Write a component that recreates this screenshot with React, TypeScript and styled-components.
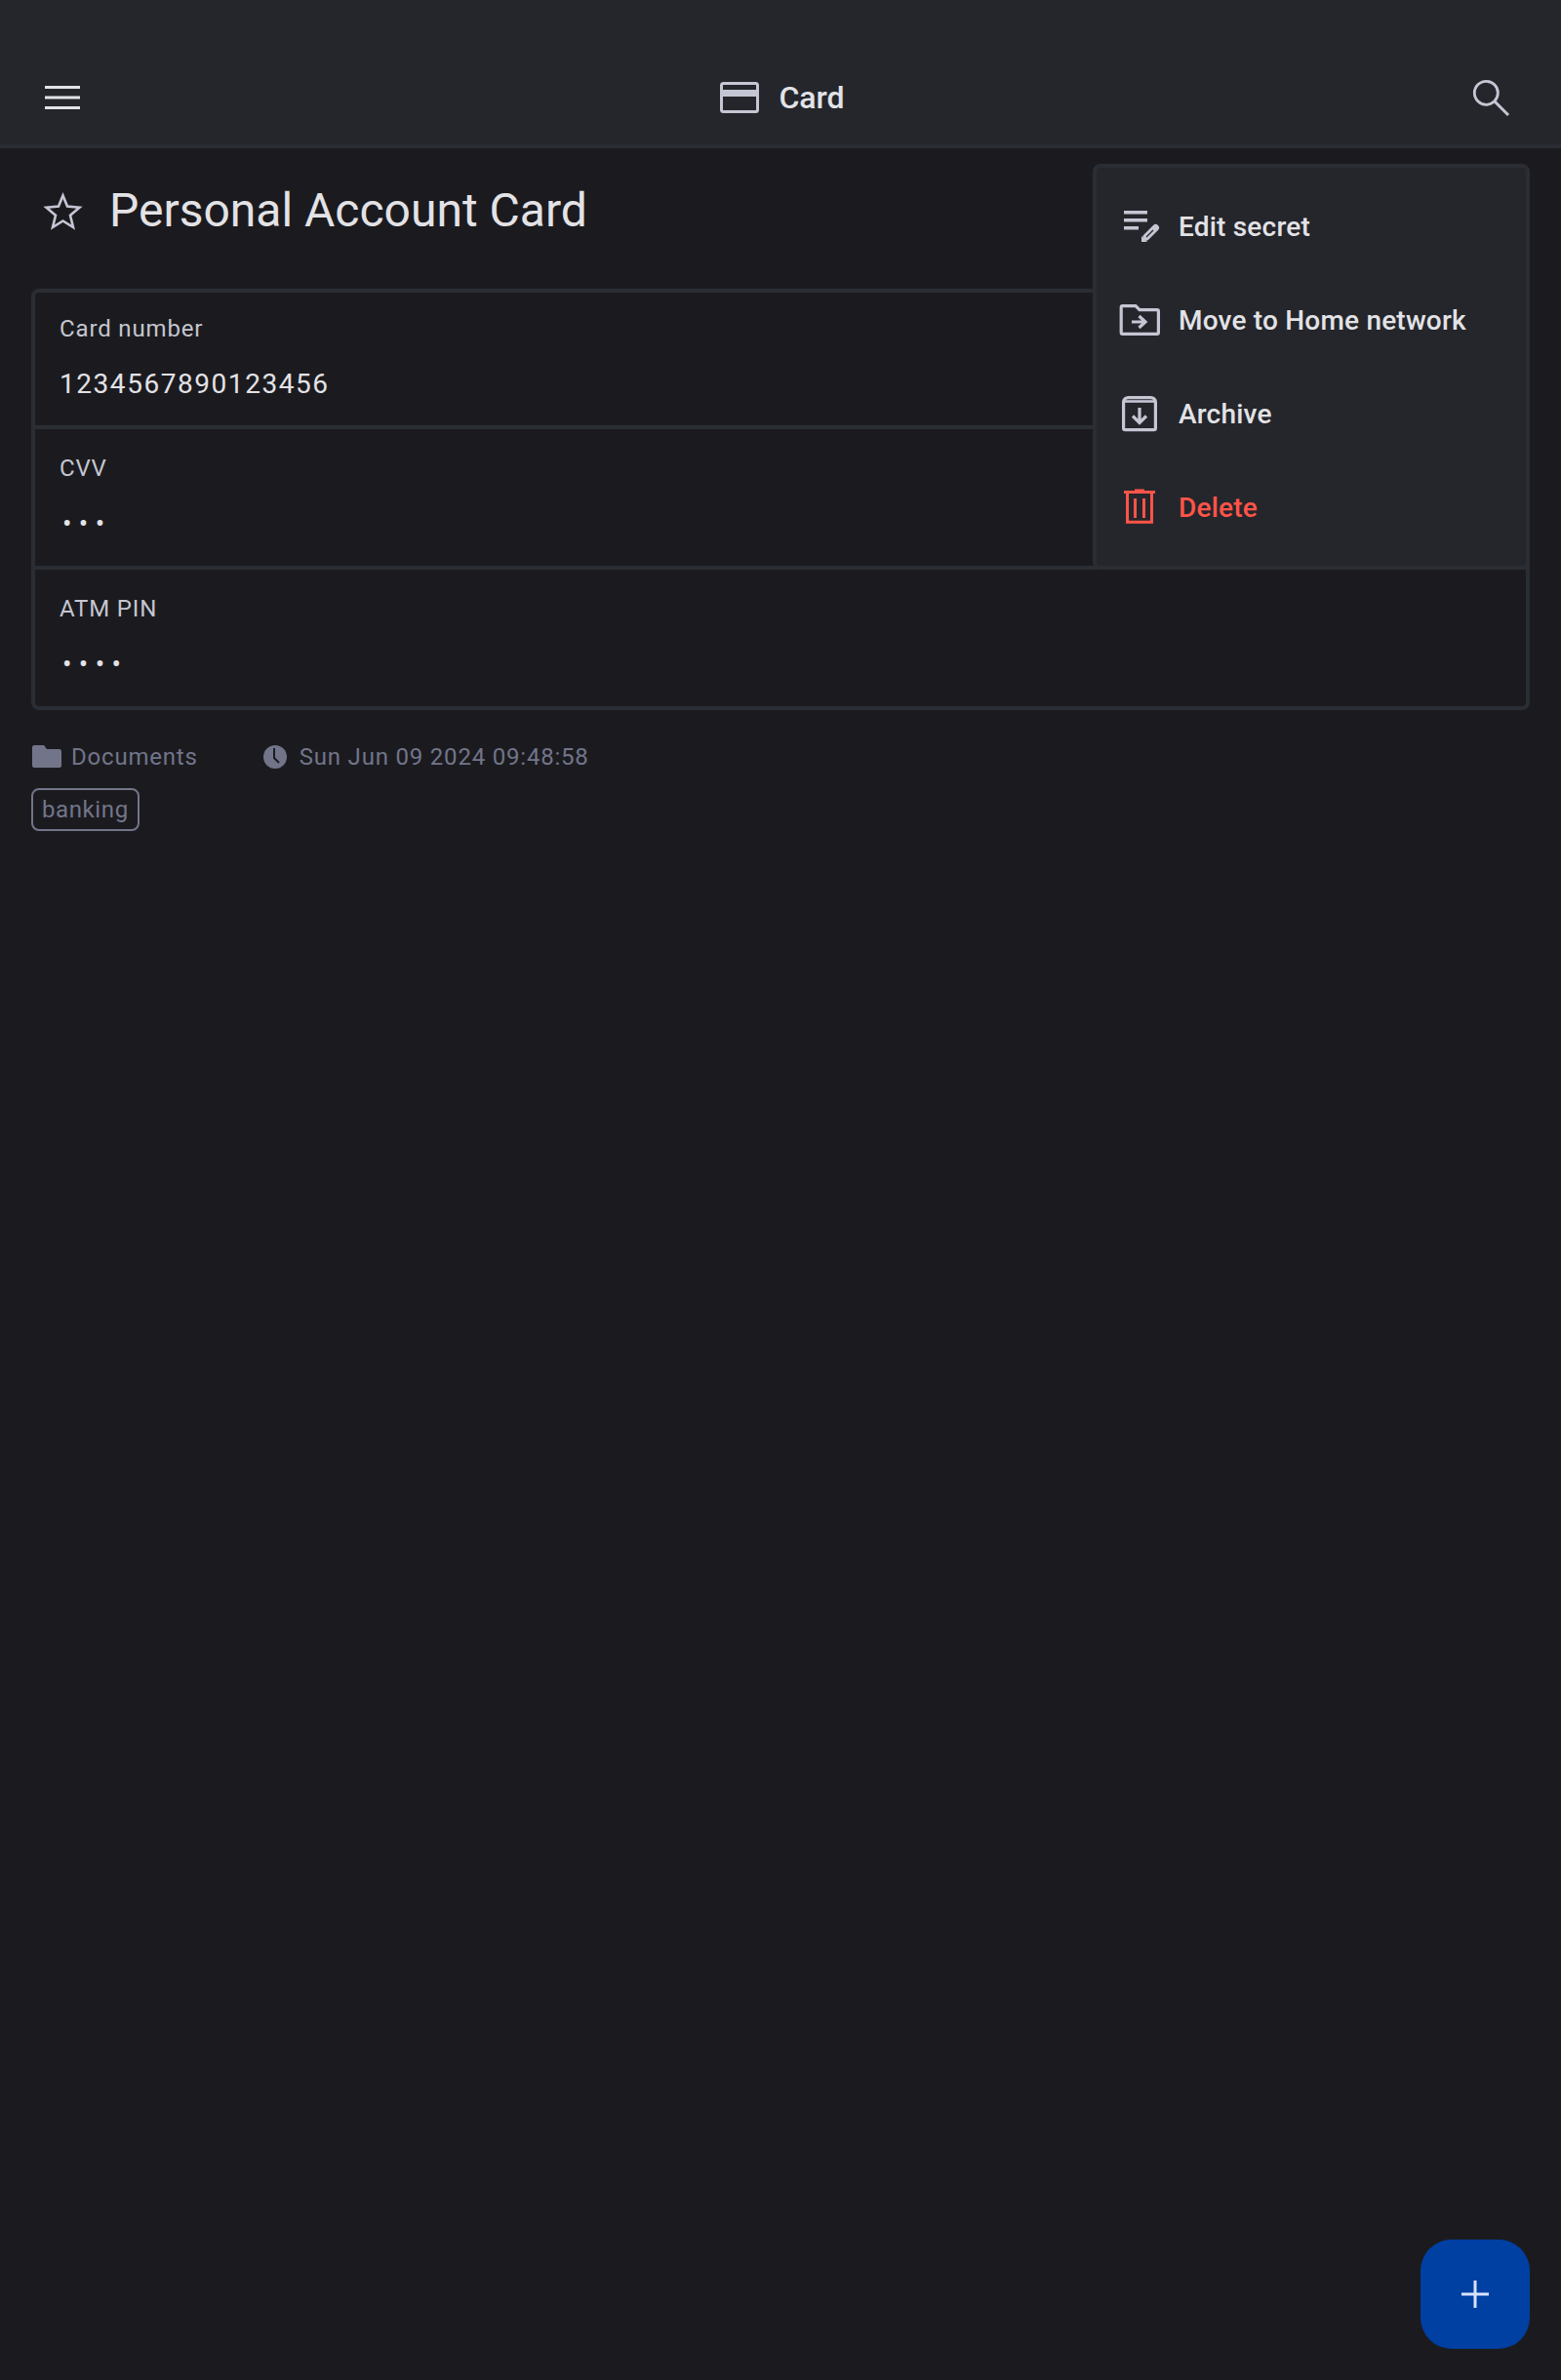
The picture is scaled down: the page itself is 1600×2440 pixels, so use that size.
import React from 'react';
import styled, { createGlobalStyle } from 'styled-components';

const Global = createGlobalStyle`
  html, body { margin: 0; padding: 0; background: #1b1b1f; }
  * { box-sizing: border-box; }
`;

const Page = styled.div`
  position: relative;
  width: 1600px;
  height: 2440px;
  overflow: hidden;
  background: #1b1b1f;
  color: #e3e2e6;
  font-family: Roboto, "Liberation Sans", sans-serif;
`;

const Header = styled.header`
  height: 152px;
  padding: 52px 48px 0 40px;
  background: #24262b;
  border-bottom: 4px solid #2a2d34;
  display: flex;
  align-items: center;
  justify-content: space-between;
`;

const HeaderTitle = styled.div`
  display: flex;
  align-items: center;
  gap: 16px;
  margin-left: 8px;
  font-size: 32px;
  font-weight: 500;
  line-height: 48px;
`;

const Icon = styled.svg<{ $color?: string }>`
  display: block;
  width: 48px;
  height: 48px;
  flex: none;
  color: ${p => p.$color ?? '#c5c6d4'};
`;

const Main = styled.main`
  padding: 0 32px;
`;

const TitleRow = styled.div`
  height: 144px;
  padding: 39px 8px 0;
  display: flex;
  align-items: flex-start;
  gap: 24px;
`;

const Title = styled.h1`
  margin: 1px 0 0;
  font-size: 48px;
  font-weight: 400;
  line-height: 48px;
  color: #e3e2e6;
`;

const Fields = styled.section`
  border: 4px solid #2a2d34;
  border-radius: 8px;
`;

const Field = styled.div<{ $top: number; $height: number; $last?: boolean }>`
  height: ${p => p.$height}px;
  padding: ${p => p.$top}px 25px 0;
  border-bottom: ${p => (p.$last ? 'none' : '4px solid #2a2d34')};
`;

const Label = styled.div`
  font-size: 24px;
  line-height: 32px;
  letter-spacing: 0.85px;
  color: #c5c6d0;
`;

const Value = styled.div<{ $masked?: boolean }>`
  margin-top: 23px;
  padding-left: ${p => (p.$masked ? '3px' : '0')};
  font-size: 28px;
  line-height: 36px;
  letter-spacing: ${p => (p.$masked ? '7.4px' : '1.55px')};
  color: #e3e2e6;
`;

const Meta = styled.div`
  display: flex;
  align-items: center;
  gap: 63px;
  height: 48px;
  margin-top: 24px;
  color: #72758a;
  font-size: 24px;
  letter-spacing: 0.8px;
`;

const MetaItem = styled.div`
  display: flex;
  align-items: center;
  gap: 9px;
`;

const MetaIcon = styled.svg`
  display: block;
  width: 32px;
  height: 32px;
  flex: none;
  color: #72758a;
`;

const Tag = styled.div`
  display: inline-block;
  margin-top: 8px;
  height: 44px;
  padding: 0 9px;
  border: 2px solid #72758a;
  border-radius: 8px;
  color: #72758a;
  font-size: 24px;
  line-height: 40px;
  letter-spacing: 0.6px;
`;

const Menu = styled.nav`
  position: absolute;
  top: 168px;
  left: 1120px;
  width: 448px;
  height: 416px;
  padding: 12px 0;
  background: #24262b;
  border: 4px solid #2a2d34;
  border-radius: 8px;
`;

const MenuItem = styled.div<{ $danger?: boolean }>`
  height: 96px;
  padding-left: 20px;
  display: flex;
  align-items: center;
  gap: 16px;
  font-size: 28px;
  font-weight: 500;
  letter-spacing: 0.2px;
  color: ${p => (p.$danger ? '#ff5449' : '#e3e2e6')};
`;

const Fab = styled.button`
  position: absolute;
  left: 1456px;
  top: 2296px;
  width: 112px;
  height: 112px;
  padding: 0;
  border: none;
  border-radius: 32px;
  background: #0040a3;
  display: flex;
  align-items: center;
  justify-content: center;
`;

const stroke = { fill: 'none', stroke: 'currentColor', strokeWidth: 3.2 } as const;

export default function App() {
  return (
    <Page>
      <Global />
      <Header>
        <Icon viewBox="0 0 48 48" fill="#e3e2e6">
          <path d="M6 12h36v3H6zM6 22.500h36v3H6zM6 33h36v3H6z" />
        </Icon>
        <HeaderTitle>
          <Icon viewBox="0 0 48 48">
            <rect x="5.500" y="9.500" width="37" height="29" rx="2" {...stroke} strokeWidth={3} />
            <path d="M5 16h38v7H5z" fill="currentColor" />
          </Icon>
          Card
        </HeaderTitle>
        <Icon viewBox="0 0 48 48">
          <circle cx="19.300" cy="19.300" r="12" {...stroke} strokeWidth={2.8} />
          <path d="M28 28l14 14" {...stroke} strokeWidth={3} />
        </Icon>
      </Header>
      <Main>
        <TitleRow>
          <Icon viewBox="0 0 48 48">
            <path d="M24.500 9.500L29 20.500l12.500 1.200L32 29.800 35 42l-10.500-6.500L14 42l3-12.200-9.500-8.100L20 20.500z" {...stroke} strokeWidth={2.6} strokeLinejoin="miter" />
          </Icon>
          <Title>Personal Account Card</Title>
        </TitleRow>
        <Fields>
          <Field $top={21} $height={140}>
            <Label>Card number</Label>
            <Value>1234567890123456</Value>
          </Field>
          <Field $top={24} $height={144}>
            <Label>CVV</Label>
            <Value $masked>•••</Value>
          </Field>
          <Field $top={24} $height={140} $last>
            <Label>ATM PIN</Label>
            <Value $masked>••••</Value>
          </Field>
        </Fields>
        <Meta>
          <MetaItem>
            <MetaIcon viewBox="0 0 32 32">
              <path d="M3 4h10l3 4h13c1 0 2 1 2 2v15c0 1-1 2-2 2H3c-1 0-2-1-2-2V6c0-1 1-2 2-2z" fill="currentColor" />
            </MetaIcon>
            Documents
          </MetaItem>
          <MetaItem>
            <MetaIcon viewBox="0 0 32 32">
              <circle cx="16" cy="16" r="12" fill="currentColor" />
              <path d="M15 7v10l5 5" fill="none" stroke="#1b1b1f" strokeWidth="2" />
            </MetaIcon>
            Sun Jun 09 2024 09:48:58
          </MetaItem>
        </Meta>
        <Tag>banking</Tag>
      </Main>
      <Menu>
        <MenuItem>
          <Icon viewBox="0 0 48 48">
            <path d="M8 8h24v3.400H8zM8 16h24v3.400H8zM8 24h15v3.400H8z" fill="currentColor" />
            <path d="M31 35l9.500-9.500" fill="none" stroke="currentColor" strokeWidth="7" strokeLinecap="round" />
            <path d="M26 40v-6l6 6z" fill="currentColor" />
            <path d="M31 35l7-7" fill="none" stroke="#24262b" strokeWidth="1.200" />
          </Icon>
          Edit secret
        </MenuItem>
        <MenuItem>
          <Icon viewBox="0 0 48 48">
            <path d="M6.600 9.600h13.400l4 4h18c.8 0 1.400.6 1.400 1.400v22c0 .8-.6 1.400-1.400 1.400H6.600c-.8 0-1.400-.6-1.400-1.400V11c0-.8.6-1.400 1.400-1.400z" {...stroke} />
            <path d="M16 26h14M23.500 20l6.500 6-6.500 6" {...stroke} />
          </Icon>
          Move to Home network
        </MenuItem>
        <MenuItem>
          <Icon viewBox="0 0 48 48">
            <path d="M7.600 12.500c0-3 2-4.900 5-4.900h22.800c3 0 5 1.900 5 4.900V39c0 1-.7 1.700-1.700 1.700H9.300c-1 0-1.700-.7-1.700-1.700z" {...stroke} />
            <path d="M8 11.500h32" {...stroke} strokeWidth={2.600} />
            <path d="M24 18v15M17 26.500l7 7 7-7" {...stroke} />
          </Icon>
          Archive
        </MenuItem>
        <MenuItem $danger>
          <Icon viewBox="0 0 48 48" $color="#ff5449">
            <path d="M8 7h11V5.500h10V7h11v3H8z" fill="currentColor" />
            <path d="M11.500 9v30.300h25V9" {...stroke} strokeWidth={3} />
            <path d="M18 15h3v20h-3zM27 15h3v20h-3z" fill="currentColor" />
          </Icon>
          Delete
        </MenuItem>
      </Menu>
      <Fab aria-label="Add">
        <Icon viewBox="0 0 48 48" $color="#d8e2ff">
          <path d="M10 22.500h28v3H10zM22.500 10h3v28h-3z" fill="currentColor" />
        </Icon>
      </Fab>
    </Page>
  );
}
